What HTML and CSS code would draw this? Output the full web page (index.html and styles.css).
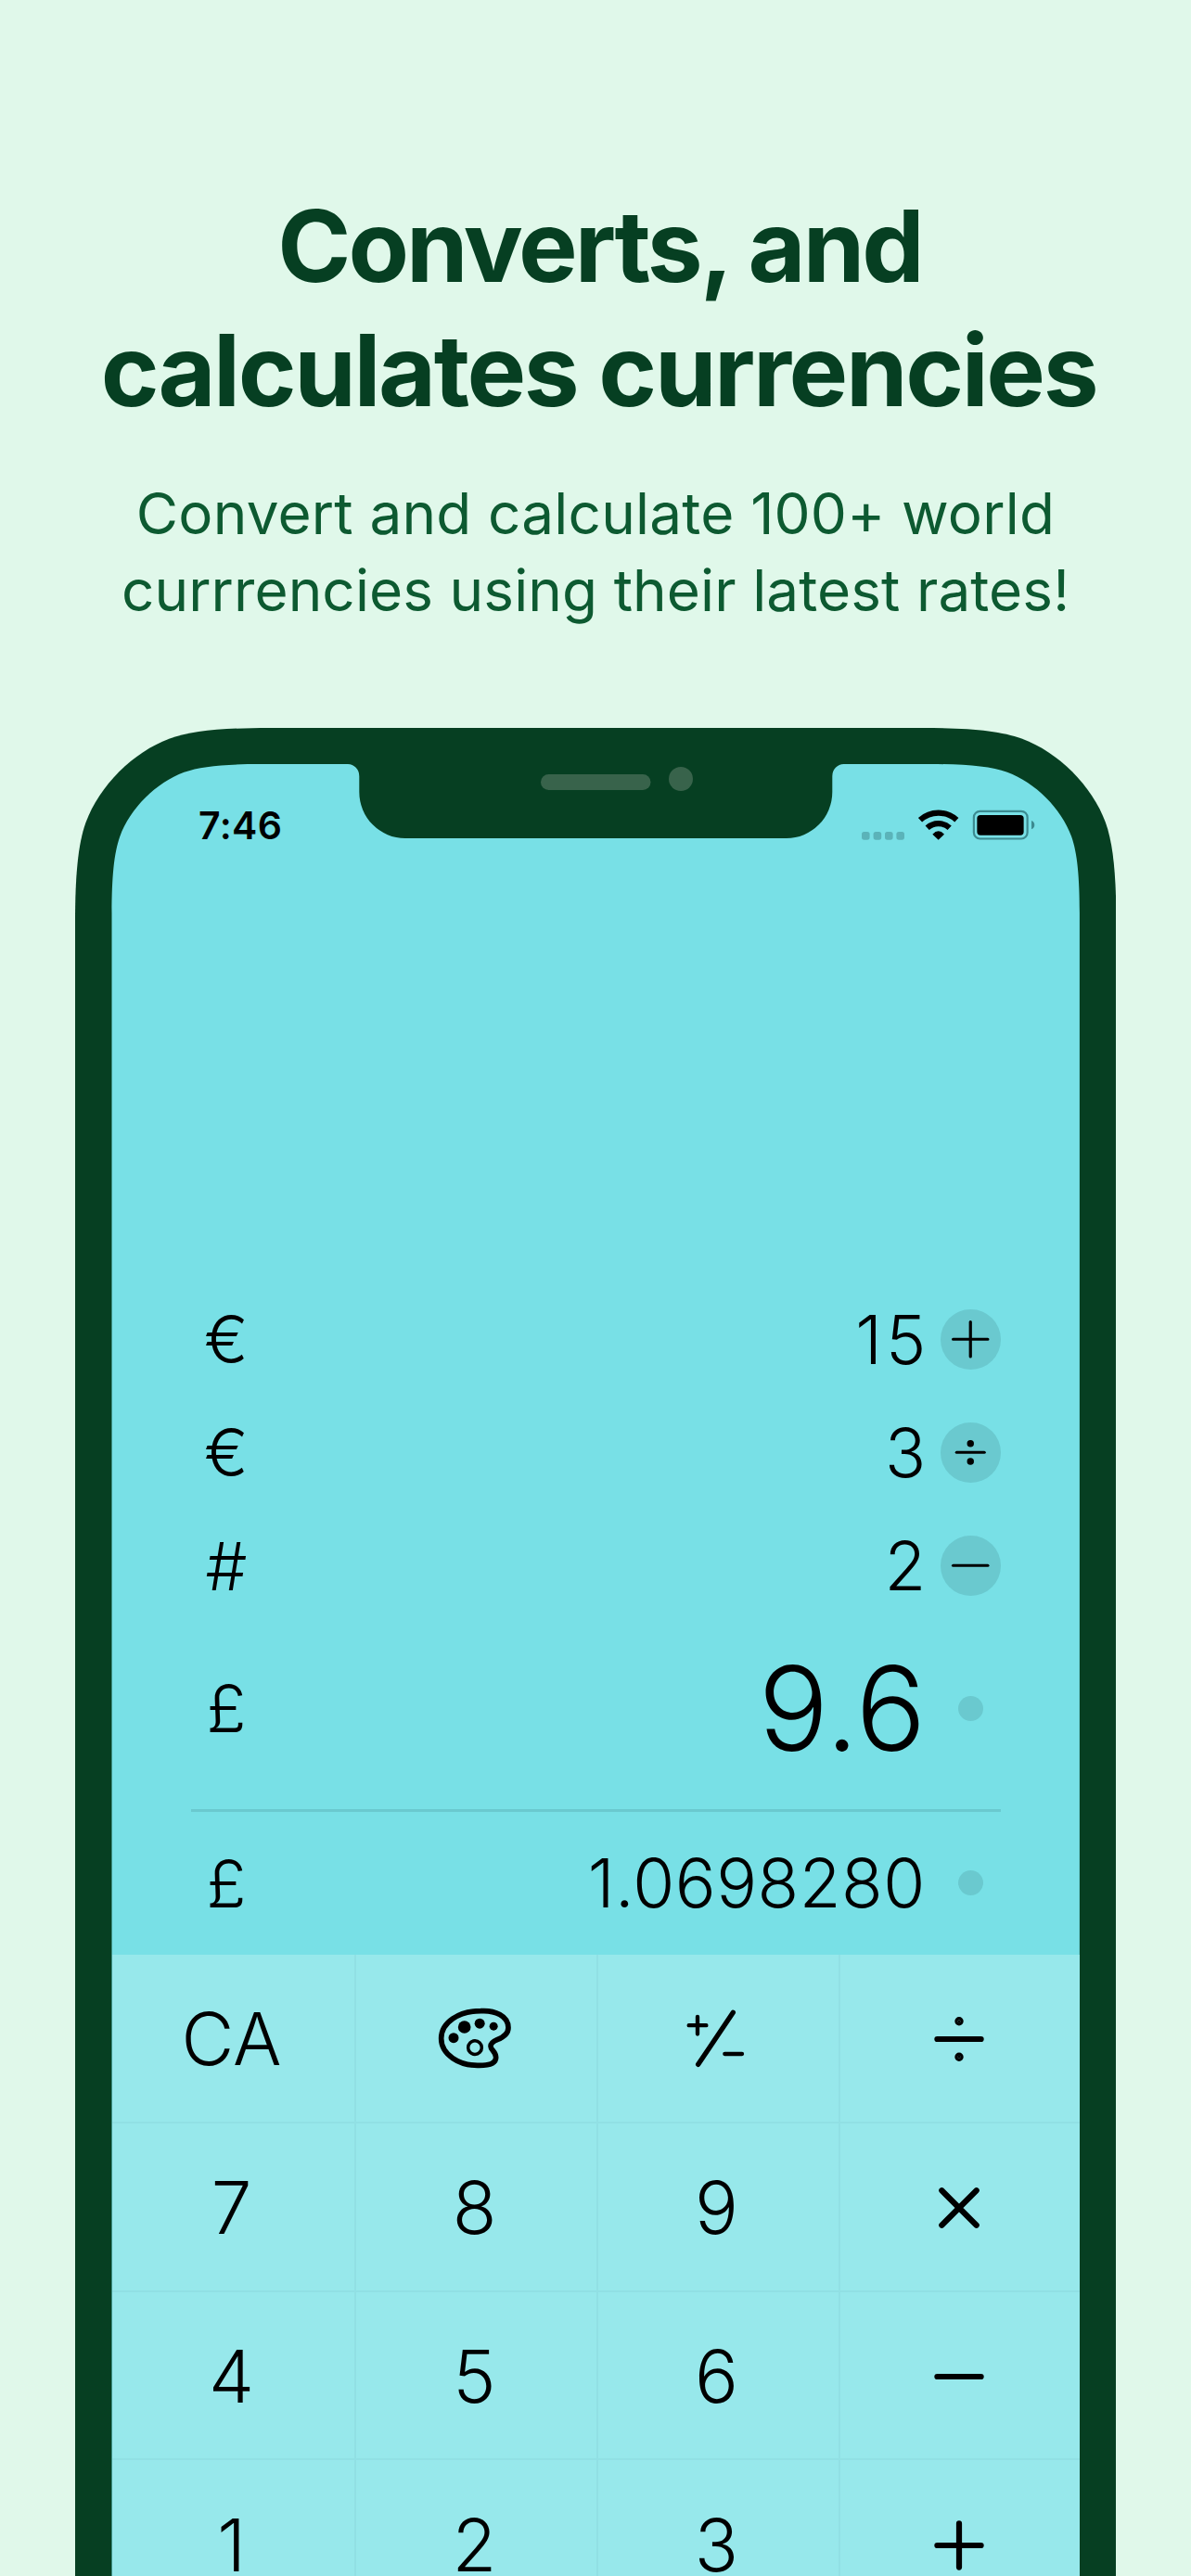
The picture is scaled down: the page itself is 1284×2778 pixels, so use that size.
FILE: index.html
```html
<!DOCTYPE html>
<html lang="en">
<head>
<meta charset="utf-8">
<title>Currency calculator</title>
<link rel="stylesheet" href="styles.css">
</head>
<body>
<main class="poster">
  <header class="intro">
    <h1 class="title"><span class="title-a">Converts, and</span><span class="title-b">calculates currencies</span></h1>
    <p class="subtitle"><span class="subtitle-a">Convert and calculate 100+ world</span><span class="subtitle-b">currrencies using their latest rates!</span></p>
  </header>

  <section class="phone">
    <svg class="frame" viewBox="0 0 1122.4 1993" aria-hidden="true">
      <path fill="#063f22" d="M0 1993V210C0 160 3 125.500 11.500 102C26 62.500 62.500 26 102 11.500C125.500 3 160 0 210 0H912.4C962.4 0 996.900 3 1020.400 11.500C1059.900 26 1096.400 62.500 1110.900 102C1119.400 125.500 1122.4 160 1122.4 210V1993Z"/>
      <path fill="#78e0e6" d="M39.5 1993V199.6C39.5 161.4 41.8 135 48.3 117C59.4 86.8 87.3 58.9 117.5 47.8C135.5 41.3 161.9 39 200.1 39H294A12.3 13 0 0 1 306.3 52V69A49.5 50 0 0 0 355.8 119H766.8A49.5 50 0 0 0 816.3 69V52A12.3 13 0 0 1 828.6 39H922.3C960.5 39 986.9 41.3 1004.9 47.8C1035.1 58.9 1063 86.8 1074.1 117C1080.6 135 1082.9 161.4 1082.9 199.6V1993Z"/>
      <rect x="502" y="50" width="118.5" height="17" rx="8.5" fill="#38634b"/>
      <circle cx="653" cy="55" r="13" fill="#38634b"/>
    </svg>

    <div class="screen">
      <div class="status">
        <span class="time">7:46</span>
        <div class="status-icons">
          <svg class="signal" viewBox="0 0 46 9"><rect width="8.6" height="8.7" rx="2.6"/><rect x="12.6" width="8.6" height="8.7" rx="2.6"/><rect x="25" width="8.6" height="8.7" rx="2.6"/><rect x="37.4" width="8.6" height="8.7" rx="2.6"/></svg>
          <svg class="wifi" viewBox="320 300 150 110" fill="none" stroke="#000" stroke-width="18.5"><path d="M335 340A87 87 0 0 1 453 340"/><path d="M358 365.5A53 53 0 0 1 430 365.5"/><path d="M375 386Q394 366 413 386L394 404Z" fill="#000" stroke="none"/></svg>
          <svg class="battery" viewBox="500 305 210 106"><rect x="508.5" y="313.5" width="173.5" height="89" rx="20" fill="none" stroke="#3c8a90" stroke-width="6.5"/><rect x="519" y="326" width="151" height="65" rx="11"/><path d="M695 344Q705 348 705 358T695 372Z" fill="#3c8a90"/></svg>
        </div>
      </div>

      <div class="tape">
        <div class="row"><span class="unit">€</span><span class="amount pair">15</span><span class="badge"><svg viewBox="-32 -32 64 64"><path d="M-18.5 0H18.5M0-18.5V18.5"/></svg></span></div>
        <div class="row"><span class="unit">€</span><span class="amount">3</span><span class="badge"><svg viewBox="-32 -32 64 64"><path d="M-14.8 0H14.8"/><circle cy="-9.5" r="2.1"/><circle cy="9.7" r="2.1"/></svg></span></div>
        <div class="row"><span class="unit">#</span><span class="amount">2</span><span class="badge"><svg viewBox="-32 -32 64 64"><path d="M-18.5 0H18.5"/></svg></span></div>
        <div class="row current"><span class="unit">£</span><span class="amount">9.6</span><span class="badge dot"></span></div>
        <div class="divider"></div>
        <div class="row result"><span class="unit">£</span><span class="amount">1.0698280</span><span class="badge dot"></span></div>
      </div>

      <div class="keypad">
        <div class="key">CA</div>
        <div class="key"><svg class="palette" viewBox="0 0 312 270" fill="none" stroke="#000"><path stroke-width="17" d="M175 44C220 41 264 60 264 98C264 121 243 131 228 137C214 143 207 149 207 158C207 170 224 176 224 194C224 214 200 220 170 220C105 222 47 185 47 133C47 80 105 44 175 44Z"/><circle cx="156" cy="162.5" r="22" stroke-width="10.5"/><g fill="#000" stroke="none"><circle cx="87" cy="131" r="16.5"/><circle cx="122" cy="96" r="20.5"/><circle cx="171.5" cy="84.5" r="16.5"/><circle cx="216.5" cy="93.5" r="13.5"/></g></svg></div>
        <div class="key"><svg class="sign" viewBox="0 0 270 270" fill="none" stroke="#000" stroke-linecap="round"><path stroke-width="13" d="M41 90.5H97M69 62.5V118.5M157 183H213"/><path stroke-width="16" d="M184 49L71 217"/></svg></div>
        <div class="key"><svg class="op" viewBox="-30 -30 60 60"><path d="M-23.6 0H23.6"/><circle cy="-19.2" r="1.6"/><circle cy="19.2" r="1.6"/></svg></div>
        <div class="key">7</div><div class="key">8</div><div class="key">9</div>
        <div class="key"><svg class="op" viewBox="-30 -30 60 60"><path d="M-18.7-18.7L18.7 18.7M18.7-18.7L-18.7 18.7"/></svg></div>
        <div class="key">4</div><div class="key">5</div><div class="key">6</div>
        <div class="key"><svg class="op" viewBox="-30 -30 60 60"><path d="M-23.6 0H23.6"/></svg></div>
        <div class="key">1</div><div class="key">2</div><div class="key">3</div>
        <div class="key"><svg class="op" viewBox="-30 -30 60 60"><path d="M-23.6 0H23.6M0-23.6V23.6"/></svg></div>
      </div>
    </div>
  </section>
</main>
</body>
</html>
```
FILE: styles.css
```css
* { box-sizing: border-box; }

body {
  margin: 0;
  background: #e0f8ea;
  font-family: "Inter", "Liberation Sans", sans-serif;
  color: #000;
}

.poster {
  width: 1284px;
  height: 2778px;
  overflow: hidden;
}

.intro {
  height: 785px;
  padding-top: 198px;
  text-align: center;
}

.title {
  margin: 0;
  font-size: 107px;
  font-weight: 700;
  line-height: 134px;
  color: #063f22;
}

.title span,
.subtitle span { display: block; white-space: nowrap; }

.title-a { letter-spacing: -3px; padding-left: 9px; }
.title-b { letter-spacing: -2.4px; padding-left: 7px; }

.subtitle {
  margin: 46px 0 0;
  font-size: 62px;
  line-height: 83.4px;
  color: #0d5a31;
}

.subtitle-a { letter-spacing: 0.2px; }
.subtitle-b { letter-spacing: 0.1px; }

.phone {
  position: relative;
  width: 1122.4px;
  height: 1993px;
  margin-left: 81px;
}

.frame {
  position: absolute;
  inset: 0;
  width: 100%;
  height: 100%;
}

.screen {
  position: relative;
  display: flex;
  flex-direction: column;
  width: 1043.4px;
  height: 1993px;
  margin: 0 auto;
  padding-top: 39px;
  overflow: hidden;
}

.status {
  flex: none;
  display: flex;
  justify-content: space-between;
  align-items: center;
  height: 130px;
  padding: 0 47px 0 93.5px;
}

.time {
  font-size: 41px;
  font-weight: 600;
  letter-spacing: 0.4px;
  line-height: 50px;
  padding-top: 2px;
}

.status-icons { display: flex; align-items: center; }
.signal { width: 46px; height: 9px; margin: 24px 11.7px 0 0; fill: #5bb3b9; }
.wifi { width: 50px; height: 36.7px; margin-right: 10px; }
.battery { width: 70px; height: 35.3px; margin-top: 1px; }

.tape {
  flex: none;
  display: flex;
  flex-direction: column;
  justify-content: flex-end;
  height: 1154px;
  padding: 0 85.2px 0 85.5px;
}

.row {
  display: flex;
  align-items: center;
  height: 122.2px;
}

.unit {
  width: 76px;
  font-size: 71px;
  font-weight: 300;
  text-align: center;
}

.amount {
  flex: 1;
  margin-right: 16px;
  font-size: 73px;
  font-weight: 300;
  text-align: right;
  line-height: 1;
}

.pair { letter-spacing: 4px; margin-right: 12px; }

.badge {
  width: 64.5px;
  height: 64.5px;
  border-radius: 50%;
  background: #6ac9cf;
}

.badge svg {
  display: block;
  width: 100%;
  stroke: #000;
  stroke-width: 3.2;
  stroke-linecap: round;
}

.dot { width: 27px; height: 27px; margin: 0 18.8px 0 18.7px; }

.current { height: 184.6px; }
.current .amount { font-size: 126px; }
.divider { height: 3px; margin-top: 16.5px; background: #6ac9cf; }
.result { height: 154.2px; }
.result .amount { letter-spacing: 0.5px; margin-right: 16.5px; }

.keypad {
  flex: none;
  display: grid;
  grid-template-columns: 263px 261px 261px 1fr;
  grid-auto-rows: 181.8px;
  background: #97e8eb;
  font-size: 78px;
  font-weight: 300;
  line-height: 0.8;
}

.key {
  display: flex;
  align-items: center;
  justify-content: center;
  padding: 3px 3px 0 0;
  border-right: 2px solid #91e0e4;
  border-bottom: 2px solid #91e0e4;
}

.key:nth-child(4n) { border-right: 0; padding-right: 2px; }

.palette { width: 104px; height: 90px; }
.sign { width: 90px; height: 90px; margin-left: 2px; }

.op {
  width: 60px;
  height: 60px;
  stroke: #000;
  stroke-width: 6.2;
  stroke-linecap: round;
}
```
